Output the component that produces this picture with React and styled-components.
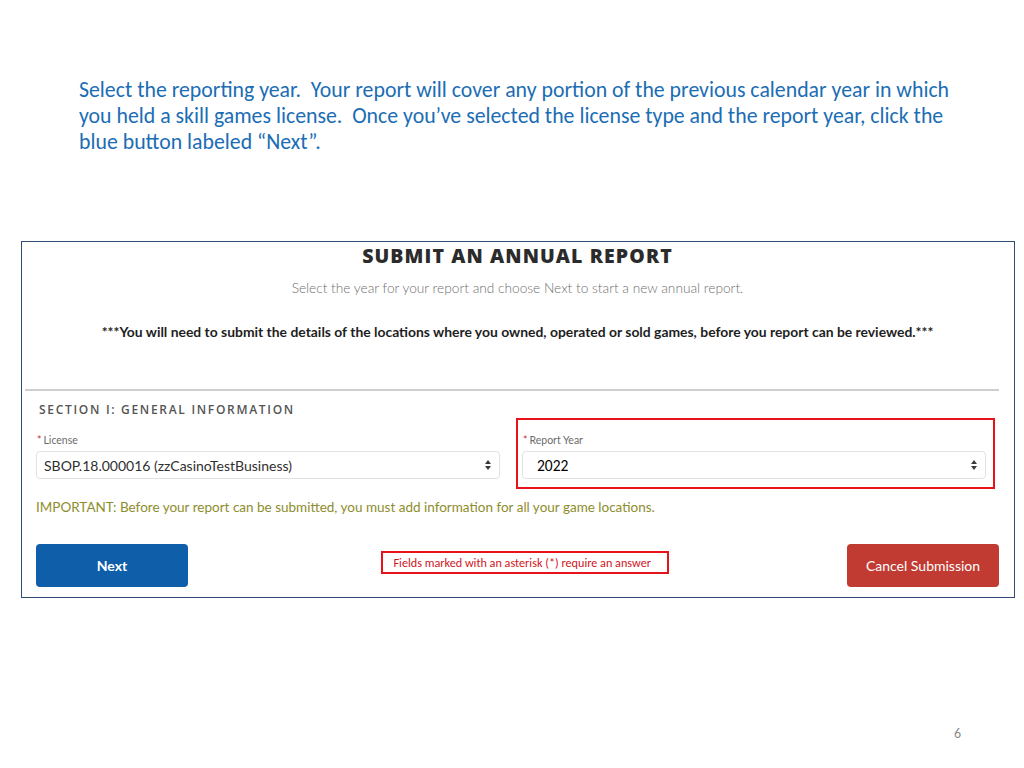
import React from "react";
import styled, { createGlobalStyle } from "styled-components";

const Global = createGlobalStyle`
  html, body { margin: 0; padding: 0; background: #fff; }
  body { font-family: Lato, "Liberation Sans", sans-serif; width: 1024px; height: 768px; overflow: hidden; }
  * { box-sizing: border-box; }
`;

const Page = styled.div`
  width: 1024px;
  height: 768px;
  display: flex;
  flex-direction: column;
  padding-top: 77px;
`;

const Intro = styled.p`
  margin: 0 0 0 79px;
  font-family: Carlito, Lato, "Liberation Sans", sans-serif;
  font-size: 21.8px;
  line-height: 26px;
  color: #1b6db4;
  white-space: nowrap;
`;

const Panel = styled.section`
  margin: 86px 0 0 21px;
  width: 994px;
  height: 357px;
  border: 1px solid #2e4a75;
  padding: 0 15px 0 14px;
  display: flex;
  flex-direction: column;
`;

const Title = styled.h1`
  margin: 2px 0 0;
  text-align: center;
  font-family: "Open Sans", Lato, sans-serif;
  font-weight: 800;
  font-size: 19.5px;
  line-height: 24px;
  color: #2b2b2b;
  letter-spacing: 1.1px;
`;

const Subtitle = styled.p`
  margin: 11px 0 0;
  text-align: center;
  font-size: 13.7px;
  font-weight: 300;
  line-height: 18px;
  color: #6f6f6f;
`;

const Warning = styled.p`
  margin: 26px 0 0;
  text-align: center;
  font-size: 13.9px;
  font-weight: 700;
  line-height: 18px;
  color: #1e1e1e;
`;

const Rule = styled.hr`
  margin: 48px 0 0 -11px;
  border: 0;
  height: 2px;
  background: #cfcfcf;
`;

const SectionHeader = styled.h2`
  margin: 11px 0 0 3px;
  font-family: "Open Sans", Lato, sans-serif;
  font-weight: 600;
  font-size: 12px;
  line-height: 16px;
  letter-spacing: 1.7px;
  color: #555;
  text-transform: uppercase;
`;

const Fields = styled.div`
  display: grid;
  grid-template-columns: 464px 479px;
  column-gap: 16px;
`;

const Field = styled.div`
  display: flex;
  flex-direction: column;
  border: 2px solid ${(p) => (p.$highlight ? "#e8121b" : "transparent")};
  padding: ${(p) => (p.$highlight ? "14px 7px 8px 4px" : "14px 0 8px 0")};
  ${(p) => (!p.$highlight ? "border-left: 0; border-right: 0;" : "")}
`;

const Label = styled.label`
  font-size: 10.5px;
  line-height: 12px;
  color: #6b6b6b;
  margin: 0 0 5px 1px;
  span { color: #c23934; margin-right: 2px; }
`;

const Select = styled.div`
  height: 28px;
  border: 1px solid #e2e2e2;
  border-radius: 4px;
  display: flex;
  align-items: center;
  justify-content: space-between;
  padding: 0 7px 0 ${(p) => p.$pad || 7}px;
  font-size: ${(p) => (p.$calibri ? "15.5px" : "14px")};
  color: ${(p) => (p.$calibri ? "#000" : "#2f2f2f")};
  font-family: ${(p) => (p.$calibri ? 'Carlito, Lato, "Liberation Sans", sans-serif' : 'Lato, sans-serif')};
`;

const Important = styled.p`
  margin: 9px 0 0;
  font-size: 13.5px;
  line-height: 18px;
  color: #8d8d2b;
`;

const Actions = styled.div`
  display: flex;
  align-items: flex-start;
  justify-content: space-between;
  margin-top: 28px;
`;

const Button = styled.button`
  width: 152px;
  height: 43px;
  border: 0;
  border-radius: 4px;
  background: ${(p) => (p.$variant === "danger" ? "#c13b33" : "#0e5ea9")};
  color: #fff;
  font-family: Lato, sans-serif;
  font-weight: ${(p) => (p.$variant === "danger" ? 400 : 700)};
  font-size: 14px;
`;

const Note = styled.div`
  margin-top: 7px;
  margin-left: 14px;
  width: 288px;
  height: 23px;
  border: 2px solid #e8121b;
  display: flex;
  align-items: center;
  padding-left: 11px;
  font-family: Carlito, Lato, "Liberation Sans", sans-serif;
  font-size: 12.2px;
  color: #d0141c;
  white-space: nowrap;
`;

const PageNum = styled.div`
  margin: auto 63px 26px auto;
  font-family: Carlito, Lato, sans-serif;
  font-size: 14px;
  color: #8a8a8a;
`;

const Arrows = () => (
  <svg width="8" height="12" viewBox="0 0 8 12">
    <path d="M4 1 L7 5 H1 Z" fill="#3a3a3a" />
    <path d="M4 11 L7 7 H1 Z" fill="#3a3a3a" />
  </svg>
);

export default function App() {
  return (
    <>
      <Global />
      <Page>
        <Intro>
          Select the reporting year.&nbsp; Your report will cover any portion of the previous calendar year in which
          <br />
          you held a skill games license.&nbsp; Once you’ve selected the license type and the report year, click the
          <br />
          blue button labeled “Next”.
        </Intro>
        <Panel>
          <Title>SUBMIT AN ANNUAL REPORT</Title>
          <Subtitle>Select the year for your report and choose Next to start a new annual report.</Subtitle>
          <Warning>
            ***You will need to submit the details of the locations where you owned, operated or sold games, before you report can be reviewed.***
          </Warning>
          <Rule />
          <SectionHeader>Section I: General Information</SectionHeader>
          <Fields>
            <Field>
              <Label><span>*</span>License</Label>
              <Select>
                SBOP.18.000016 (zzCasinoTestBusiness)
                <Arrows />
              </Select>
            </Field>
            <Field $highlight>
              <Label><span>*</span>Report Year</Label>
              <Select $calibri $pad={14}>
                2022
                <Arrows />
              </Select>
            </Field>
          </Fields>
          <Important>
            IMPORTANT: Before your report can be submitted, you must add information for all your game locations.
          </Important>
          <Actions>
            <Button>Next</Button>
            <Note>Fields marked with an asterisk (*) require an answer</Note>
            <Button $variant="danger">Cancel Submission</Button>
          </Actions>
        </Panel>
        <PageNum>6</PageNum>
      </Page>
    </>
  );
}
